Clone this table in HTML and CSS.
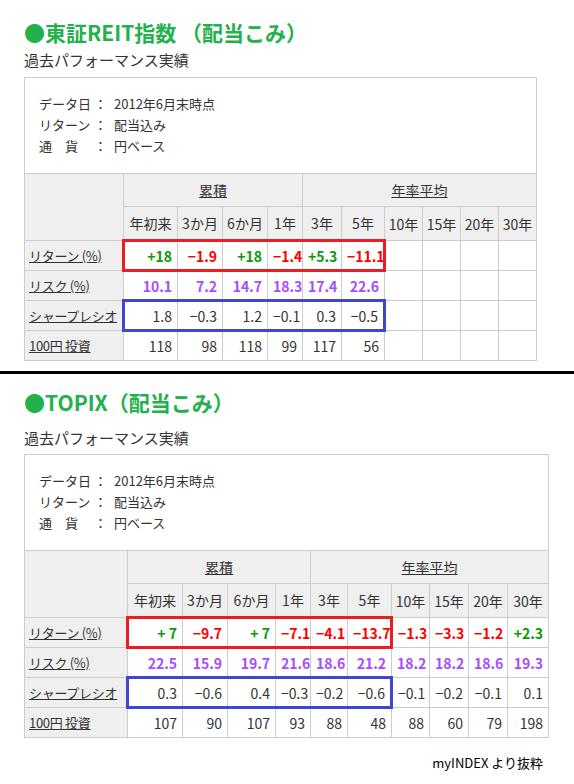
FILE: index.html
```html
<!DOCTYPE html>
<html lang="ja">
<head>
<meta charset="utf-8">
<link rel="stylesheet" href="styles.css">
</head>
<body>
<section class="sec sec1">
  <h2 class="title">●東証REIT指数 （配当こみ）</h2>
  <h3 class="sub">過去パフォーマンス実績</h3>
  <table class="perf t1">
    <colgroup>
      <col style="width:99px"><col style="width:54px"><col style="width:45px"><col style="width:45px"><col style="width:35px"><col style="width:39px"><col style="width:43px"><col style="width:38px"><col style="width:38px"><col style="width:38px"><col style="width:38px">
    </colgroup>
    <tr><td class="info" colspan="11">
      <div class="kv"><span>データ日</span><span>：</span><span>2012年6月末時点</span>
      <span>リターン</span><span>：</span><span>配当込み</span>
      <span>通　貨</span><span>：</span><span>円ベース</span></div>
    </td></tr>
    <tr class="h1"><th class="corner" rowspan="2"></th><th colspan="4"><u>累積</u></th><th colspan="6"><u>年率平均</u></th></tr>
    <tr class="h2"><th>年初来</th><th>3か月</th><th>6か月</th><th>1年</th><th>3年</th><th>5年</th><th>10年</th><th>15年</th><th>20年</th><th>30年</th></tr>
    <tr><th class="lbl"><u>リターン (%)</u></th><td class="g red rl">+18</td><td class="r red">−1.9</td><td class="g red">+18</td><td class="r red">−1.4</td><td class="g red">+5.3</td><td class="r red rr">−11.1</td><td></td><td></td><td></td><td></td></tr>
    <tr><th class="lbl"><u>リスク (%)</u></th><td class="p">10.1</td><td class="p">7.2</td><td class="p">14.7</td><td class="p">18.3</td><td class="p">17.4</td><td class="p">22.6</td><td></td><td></td><td></td><td></td></tr>
    <tr><th class="lbl"><u>シャープレシオ</u></th><td class="blue bl">1.8</td><td class="blue">−0.3</td><td class="blue">1.2</td><td class="blue">−0.1</td><td class="blue">0.3</td><td class="blue br">−0.5</td><td></td><td></td><td></td><td></td></tr>
    <tr><th class="lbl"><u>100円 投資</u></th><td>118</td><td>98</td><td>118</td><td>99</td><td>117</td><td>56</td><td></td><td></td><td></td><td></td></tr>
  </table>
</section>
<hr class="sep">
<section class="sec sec2">
  <h2 class="title">●TOPIX（配当こみ）</h2>
  <h3 class="sub">過去パフォーマンス実績</h3>
  <table class="perf t2">
    <colgroup>
      <col style="width:103px"><col style="width:55px"><col style="width:45px"><col style="width:48px"><col style="width:35px"><col style="width:37px"><col style="width:44px"><col style="width:38px"><col style="width:39px"><col style="width:39px"><col style="width:41px">
    </colgroup>
    <tr><td class="info" colspan="11">
      <div class="kv"><span>データ日</span><span>：</span><span>2012年6月末時点</span>
      <span>リターン</span><span>：</span><span>配当込み</span>
      <span>通　貨</span><span>：</span><span>円ベース</span></div>
    </td></tr>
    <tr class="h1"><th class="corner" rowspan="2"></th><th colspan="4"><u>累積</u></th><th colspan="6"><u>年率平均</u></th></tr>
    <tr class="h2"><th>年初来</th><th>3か月</th><th>6か月</th><th>1年</th><th>3年</th><th>5年</th><th>10年</th><th>15年</th><th>20年</th><th>30年</th></tr>
    <tr><th class="lbl"><u>リターン (%)</u></th><td class="g red rl">+ 7</td><td class="r red">−9.7</td><td class="g red">+ 7</td><td class="r red">−7.1</td><td class="r red">−4.1</td><td class="r red rr">−13.7</td><td class="r">−1.3</td><td class="r">−3.3</td><td class="r">−1.2</td><td class="g">+2.3</td></tr>
    <tr><th class="lbl"><u>リスク (%)</u></th><td class="p">22.5</td><td class="p">15.9</td><td class="p">19.7</td><td class="p">21.6</td><td class="p">18.6</td><td class="p">21.2</td><td class="p">18.2</td><td class="p">18.2</td><td class="p">18.6</td><td class="p">19.3</td></tr>
    <tr><th class="lbl"><u>シャープレシオ</u></th><td class="blue bl">0.3</td><td class="blue">−0.6</td><td class="blue">0.4</td><td class="blue">−0.3</td><td class="blue">−0.2</td><td class="blue br">−0.6</td><td>−0.1</td><td>−0.2</td><td>−0.1</td><td>0.1</td></tr>
    <tr><th class="lbl"><u>100円 投資</u></th><td>107</td><td>90</td><td>107</td><td>93</td><td>88</td><td>48</td><td>88</td><td>60</td><td>79</td><td>198</td></tr>
  </table>
  <p class="credit">myINDEX より抜粋</p>
</section>
</body>
</html>
```
FILE: styles.css
```css
html, body {
  margin: 0;
  padding: 0;
  background: #fff;
}
body {
  font-family: "Noto Sans CJK JP", "Noto Sans", sans-serif;
  color: #333;
}
.sec {
  padding-left: 24px;
}
.title {
  margin: 0;
  font-size: 21px;
  line-height: 24px;
  font-weight: bold;
  color: #22b14c;
}
.sub {
  margin: 0;
  font-size: 15px;
  line-height: 20px;
  font-weight: normal;
  color: #333;
}
.sec1 {
  padding-top: 20px;
}
.sec1 .sub {
  margin-top: 6px;
  margin-bottom: 7px;
}
.sec2 {
  padding-top: 16px;
}
.sec2 .sub {
  margin-top: 14px;
  margin-bottom: 6px;
}
.sep {
  margin: 10px 0 0 0;
  border: 0;
  height: 3px;
  background: #000;
}
.perf {
  border-collapse: collapse;
  table-layout: fixed;
  font-size: 13px;
}
.t1 { width: 512px; }
.t2 { width: 524px; }
.perf td, .perf th {
  border: 1px solid #ccc;
  padding: 0 5px;
  height: 30px;
  box-sizing: border-box;
  white-space: nowrap;
}
.perf td {
  text-align: right;
  background: #fff;
  font-size: 14px;
  color: #333;
}
.perf th {
  font-weight: normal;
  background: #efefef;
  color: #333;
}
.perf .h1 th { height: 33px; font-size: 14px; }
.perf .h2 th { height: 34px; font-size: 14px; padding: 0 2px; }
.perf th.lbl {
  text-align: left;
  padding-left: 4px;
  font-size: 13px;
  letter-spacing: -0.3px;
}
.perf td.info {
  text-align: left;
  padding: 15px 14px 17px;
  height: auto;
  font-size: 13px;
}
.kv {
  display: grid;
  grid-template-columns: 55px 20px 1fr;
  line-height: 21px;
}
.g { color: #0a9a0a !important; font-weight: bold; }
.r { color: #f00 !important; font-weight: bold; }
.p { color: #a64dff !important; font-weight: bold; }
.perf td.red { border-top: 3px solid #ed1c24; border-bottom: 3px solid #ed1c24; }
.perf td.rl { border-left: 3px solid #ed1c24; }
.perf td.rr { border-right: 3px solid #ed1c24; }
.perf td.blue { border-top: 3px solid #3f48cc; border-bottom: 3px solid #3f48cc; }
.perf td.bl { border-left: 3px solid #3f48cc; }
.perf td.br { border-right: 3px solid #3f48cc; }
.credit {
  margin: 17px 0 0;
  width: 519px;
  text-align: right;
  font-size: 13px;
  line-height: 16px;
  color: #000;
}
```
